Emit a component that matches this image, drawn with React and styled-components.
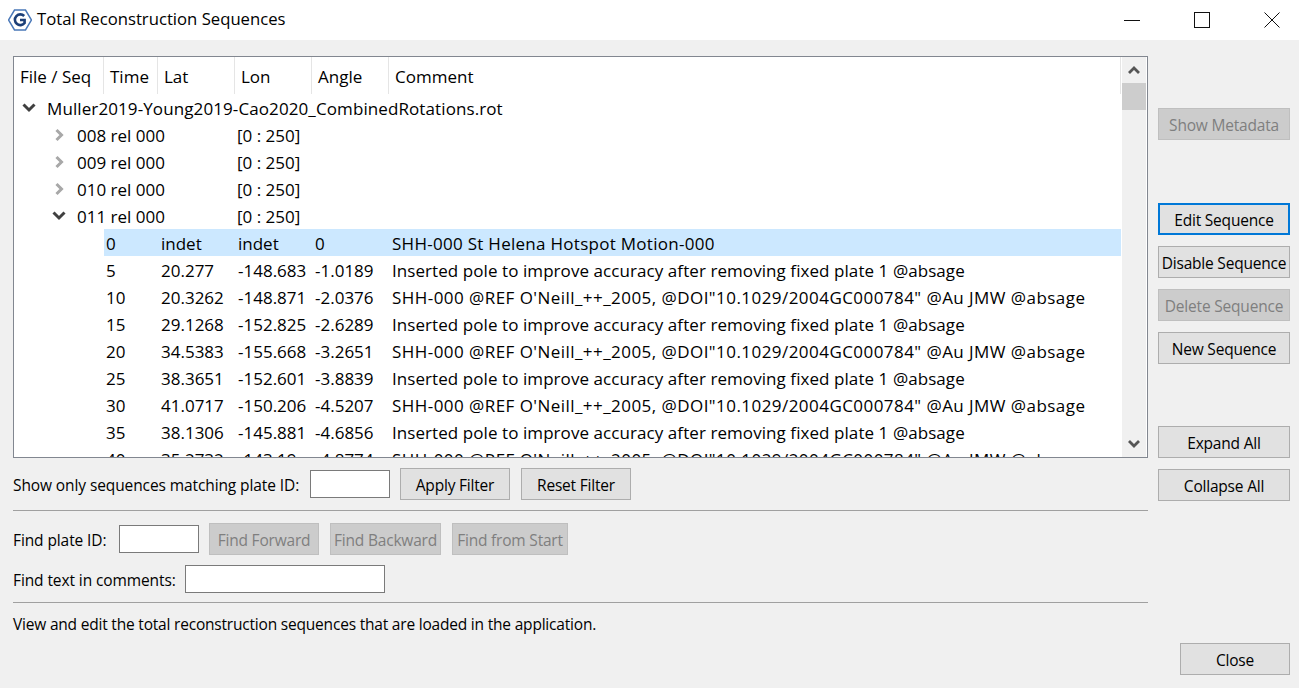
import styled, { createGlobalStyle } from "styled-components";

const GlobalStyle = createGlobalStyle`
  html, body {
    margin: 0;
    padding: 0;
    background: #f0f0f0;
  }
`;

const COLS = "90px 54px 77px 77px 77px 1fr";

const sequences = [
  { id: "008", open: false },
  { id: "009", open: false },
  { id: "010", open: false },
  { id: "011", open: true },
];

const POLE = "Inserted pole to improve accuracy after removing fixed plate 1 @absage";
const REF = `SHH-000 @REF O'Neill_++_2005, @DOI"10.1029/2004GC000784" @Au JMW @absage`;

const poles = [
  ["0", "indet", "indet", "0", "SHH-000 St Helena Hotspot Motion-000", 0.28],
  ["5", "20.277", "-148.683", "-1.0189", POLE, 0.07],
  ["10", "20.3262", "-148.871", "-2.0376", REF, 0.45],
  ["15", "29.1268", "-152.825", "-2.6289", POLE, 0.07],
  ["20", "34.5383", "-155.668", "-3.2651", REF, 0.45],
  ["25", "38.3651", "-152.601", "-3.8839", POLE, 0.07],
  ["30", "41.0717", "-150.206", "-4.5207", REF, 0.45],
  ["35", "38.1306", "-145.881", "-4.6856", POLE, 0.07],
  ["40", "35.2732", "-143.19", "-4.8774", REF, 0.45],
];

function Chevron({ open, dark }) {
  return (
    <ChevronIcon width="14" height="14" viewBox="0 0 14 14">
      <polyline
        points={open ? "1.5,3.5 7,9 12.5,3.5" : "4.5,2 9.5,7 4.5,12"}
        fill="none"
        stroke={dark ? "#404040" : "#a8a8a8"}
        strokeWidth="3"
      />
    </ChevronIcon>
  );
}

function Logo() {
  return (
    <svg width="24" height="24" viewBox="0 0 24 24">
      <polygon points="6.5,2 17.5,2 23.5,12 17.5,22 6.5,22 0.5,12" fill="#fff" stroke="#4a78b8" strokeWidth="1.5" />
      <path d="M16.2 8 A5.4 5.4 0 1 0 16.6 15 V12 H12" fill="none" stroke="#1c3f78" strokeWidth="2.6" />
    </svg>
  );
}

export default function App() {
  return (
    <Window>
      <GlobalStyle />
      <TitleBar>
        <Logo />
        <Title>Total Reconstruction Sequences</Title>
        <WindowControls>
          <WindowButton>
            <svg width="16" height="16" viewBox="0 0 16 16">
              <line x1="0" y1="8.5" x2="16" y2="8.5" stroke="#111" />
            </svg>
          </WindowButton>
          <WindowButton>
            <svg width="16" height="16" viewBox="0 0 16 16">
              <rect x="0.5" y="0.5" width="15" height="15" fill="none" stroke="#111" />
            </svg>
          </WindowButton>
          <WindowButton>
            <svg width="16" height="16" viewBox="0 0 16 16">
              <path d="M0.5 0.5 L15.5 15.5 M15.5 0.5 L0.5 15.5" stroke="#111" fill="none" />
            </svg>
          </WindowButton>
        </WindowControls>
      </TitleBar>

      <Body>
        <LeftColumn>
          <TreeBox>
            <TreeContent>
              <HeaderRow>
                {["File / Seq", "Time", "Lat", "Lon", "Angle", "Comment"].map((h) => (
                  <HeaderCell key={h}>{h}</HeaderCell>
                ))}
              </HeaderRow>
              <FileRow>
                <Chevron open dark />
                <RowText>Muller2019-Young2019-Cao2020_CombinedRotations.rot</RowText>
              </FileRow>
              {sequences.map((s) => (
                <SeqRow key={s.id}>
                  <SeqName>
                    <Chevron open={s.open} dark={s.open} />
                    <RowText>{s.id} rel 000</RowText>
                  </SeqName>
                  <RowText>[0 : 250]</RowText>
                </SeqRow>
              ))}
              {poles.map((p, i) => (
                <PoleRow key={p[0]} $selected={i === 0}>
                  <PoleCell>{p[0]}</PoleCell>
                  <PoleCell>{p[1]}</PoleCell>
                  <PoleCell>{p[2]}</PoleCell>
                  <PoleCell>{p[3]}</PoleCell>
                  <PoleCell $spacing={p[5]}>{p[4]}</PoleCell>
                </PoleRow>
              ))}
            </TreeContent>
            <ScrollBar>
              <ScrollArrow>
                <svg width="14" height="10" viewBox="0 0 14 10">
                  <polyline points="2,8 7,3 12,8" fill="none" stroke="#555" strokeWidth="2.8" />
                </svg>
              </ScrollArrow>
              <ScrollThumb />
              <ScrollTrack />
              <ScrollArrow>
                <svg width="14" height="10" viewBox="0 0 14 10">
                  <polyline points="2,2 7,7 12,2" fill="none" stroke="#555" strokeWidth="2.8" />
                </svg>
              </ScrollArrow>
            </ScrollBar>
          </TreeBox>

          <FilterRow>
            <Label $width={287}>Show only sequences matching plate ID:</Label>
            <TextBox $width={80} />
            <ButtonGroup>
              <DialogButton $width={110}>Apply Filter</DialogButton>
              <DialogButton $width={110}>Reset Filter</DialogButton>
            </ButtonGroup>
          </FilterRow>
          <Divider />
          <FindRow>
            <Label $width={96}>Find plate ID:</Label>
            <TextBox $width={80} />
            <ButtonGroup>
              <DialogButton $width={110} disabled>Find Forward</DialogButton>
              <DialogButton $width={111} disabled>Find Backward</DialogButton>
              <DialogButton $width={116} disabled>Find from Start</DialogButton>
            </ButtonGroup>
          </FindRow>
          <CommentRow>
            <Label $width={162}>Find text in comments:</Label>
            <TextBox $width={200} />
          </CommentRow>
          <Divider />
          <HelpText>View and edit the total reconstruction sequences that are loaded in the application.</HelpText>
        </LeftColumn>

        <RightColumn>
          <MetadataButton disabled>Show Metadata</MetadataButton>
          <SequenceButtons>
            <DialogButton $focused>Edit Sequence</DialogButton>
            <DialogButton>Disable Sequence</DialogButton>
            <DialogButton disabled>Delete Sequence</DialogButton>
            <DialogButton>New Sequence</DialogButton>
          </SequenceButtons>
          <ExpandButtons>
            <DialogButton>Expand All</DialogButton>
            <DialogButton>Collapse All</DialogButton>
          </ExpandButtons>
          <CloseButton>Close</CloseButton>
        </RightColumn>
      </Body>
    </Window>
  );
}

const Window = styled.div`
  width: 1299px;
  height: 688px;
  overflow: hidden;
  background: #f0f0f0;
  color: #000;
  font-family: "Open Sans", "Noto Sans", sans-serif;
  font-size: 15.5px;
  letter-spacing: -0.1px;
  display: flex;
  flex-direction: column;
`;

const TitleBar = styled.div`
  height: 40px;
  flex: none;
  background: #fff;
  display: flex;
  align-items: center;
  padding-left: 8px;
`;

const Title = styled.div`
  margin-left: 5px;
  margin-top: -3px;
  font-size: 16.7px;
  letter-spacing: 0;
`;

const WindowControls = styled.div`
  margin-left: auto;
  display: flex;
`;

const WindowButton = styled.div`
  width: 70px;
  height: 36px;
  display: flex;
  align-items: center;
  justify-content: center;
  &:last-child {
    margin-right: -8px;
  }
`;

const Body = styled.div`
  flex: 1;
  display: flex;
  padding: 16px 9px 13px 13px;
  gap: 10px;
  min-height: 0;
`;

const LeftColumn = styled.div`
  width: 1135px;
  flex: none;
  display: flex;
  flex-direction: column;
`;

const TreeBox = styled.div`
  height: 402px;
  flex: none;
  border: 1px solid #828790;
  background: #fff;
  display: flex;
  box-sizing: border-box;
  font-size: 17px;
  letter-spacing: 0;
`;

const TreeContent = styled.div`
  flex: 1;
  min-width: 0;
  overflow: hidden;
`;

const HeaderRow = styled.div`
  display: grid;
  grid-template-columns: ${COLS};
  height: 37px;
`;

const HeaderCell = styled.div`
  display: flex;
  align-items: center;
  padding-left: 6px;
  padding-top: 1px;
  border-right: 1px solid #e5e5e5;
`;

const ChevronIcon = styled.svg`
  flex: none;
`;

const RowText = styled.span`
  padding-top: 1px;
`;

const FileRow = styled.div`
  height: 27px;
  display: flex;
  align-items: center;
  gap: 11px;
  padding-left: 8px;
  letter-spacing: 0.1px;
`;

const SeqRow = styled.div`
  height: 27px;
  display: grid;
  grid-template-columns: 223px 1fr;
  align-items: center;
`;

const SeqName = styled.div`
  display: flex;
  align-items: center;
  gap: 11px;
  padding-left: 38px;
`;

const PoleRow = styled.div`
  height: 27px;
  display: grid;
  grid-template-columns: 55px 77px 77px 77px 1fr;
  align-items: center;
  margin-left: 90px;
  background: ${(p) => (p.$selected ? "#cce8ff" : "transparent")};
`;

const PoleCell = styled.div`
  padding: 1px 0 0 2px;
  white-space: nowrap;
  letter-spacing: ${(p) => p.$spacing || 0}px;
`;

const ScrollBar = styled.div`
  width: 24px;
  flex: none;
  margin: 0 1px;
  background: #f0f0f0;
  display: flex;
  flex-direction: column;
`;

const ScrollArrow = styled.div`
  height: 26px;
  flex: none;
  display: flex;
  align-items: center;
  justify-content: center;
`;

const ScrollThumb = styled.div`
  height: 27px;
  flex: none;
  background: #cdcdcd;
`;

const ScrollTrack = styled.div`
  flex: 1;
`;

const FilterRow = styled.div`
  display: flex;
  align-items: center;
  height: 32px;
  margin-top: 10px;
  gap: 10px;
`;

const FindRow = styled(FilterRow)`
  margin-top: 12px;
`;

const CommentRow = styled(FilterRow)`
  margin-top: 8px;
  margin-bottom: -3px;
`;

const ButtonGroup = styled.div`
  display: flex;
  gap: 11px;
`;

const Label = styled.span`
  width: ${(p) => p.$width}px;
  flex: none;
  white-space: nowrap;
  padding-top: 2px;
`;

const TextBox = styled.div`
  width: ${(p) => p.$width}px;
  height: 28px;
  box-sizing: border-box;
  border: 1px solid #7a7a7a;
  background: #fff;
  flex: none;
`;

const Divider = styled.div`
  height: 1px;
  background: #a0a0a0;
  margin-top: 10px;
`;

const HelpText = styled.div`
  margin-top: 10px;
  height: 22px;
  letter-spacing: -0.2px;
`;

const DialogButton = styled.button`
  width: ${(p) => (p.$width ? `${p.$width}px` : "100%")};
  height: 32px;
  flex: none;
  padding: 2px 0 0;
  box-sizing: border-box;
  font: inherit;
  letter-spacing: -0.2px;
  border: ${(p) => (p.$focused ? "2px solid #0078d7" : "1px solid #adadad")};
  background: #e1e1e1;
  color: #000;
  &:disabled {
    background: #cccccc;
    border-color: #bfbfbf;
    color: #7f7f7f;
  }
`;

const RightColumn = styled.div`
  flex: 1;
  display: flex;
  flex-direction: column;
`;

const MetadataButton = styled(DialogButton)`
  margin-top: 52px;
`;

const SequenceButtons = styled.div`
  display: flex;
  flex-direction: column;
  gap: 11px;
  margin-top: 63px;
`;

const ExpandButtons = styled(SequenceButtons)`
  margin-top: 62px;
`;

const CloseButton = styled(DialogButton)`
  width: 110px;
  margin-top: auto;
  align-self: flex-end;
`;
